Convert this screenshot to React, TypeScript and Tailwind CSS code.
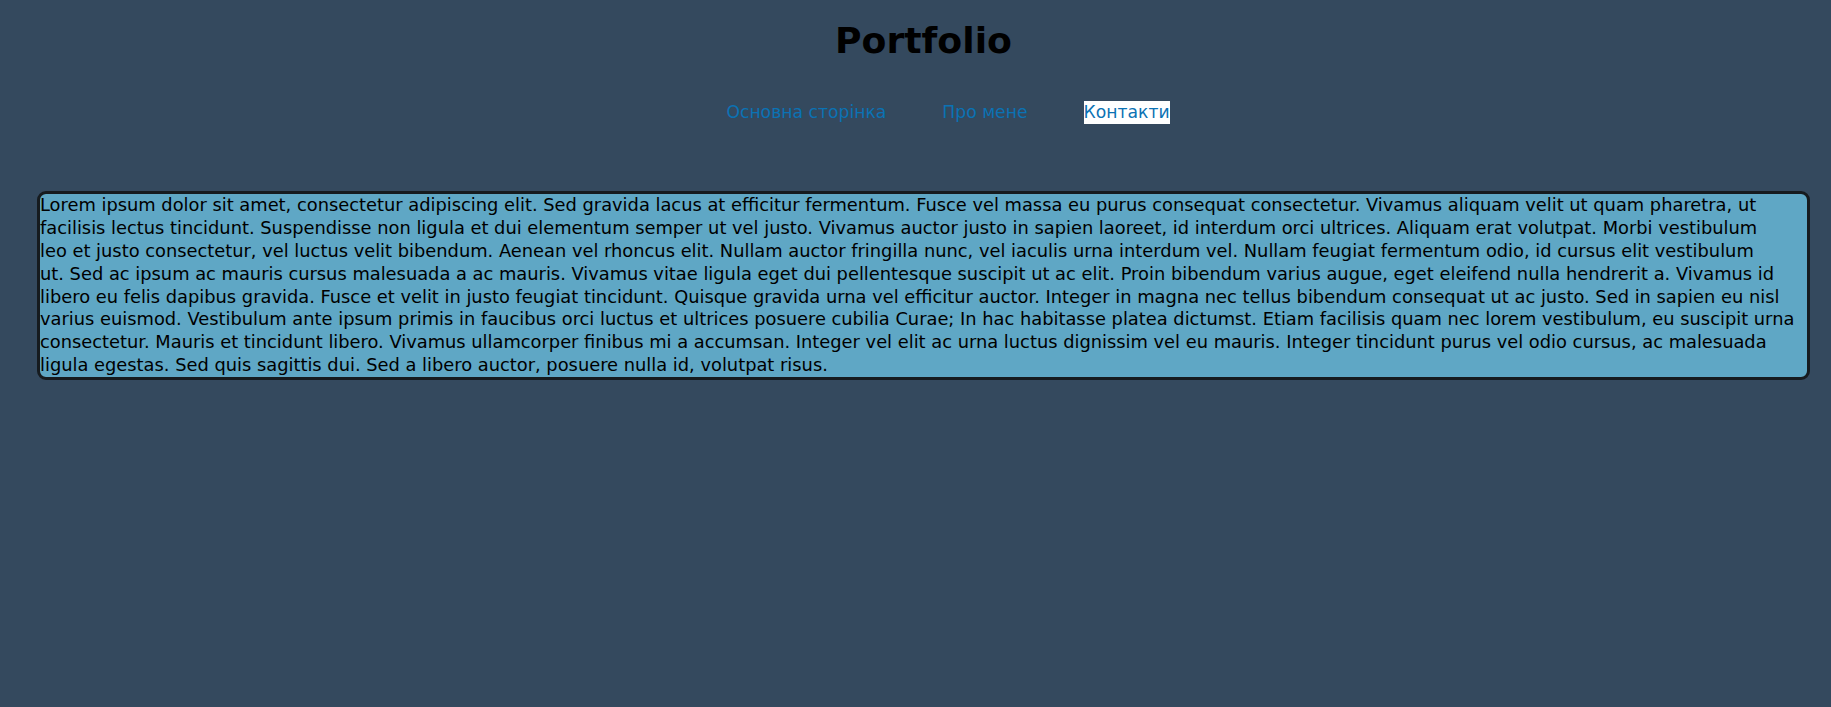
import React from "react";

const lines = [
  "Lorem ipsum dolor sit amet, consectetur adipiscing elit. Sed gravida lacus at efficitur fermentum. Fusce vel massa eu purus consequat consectetur. Vivamus aliquam velit ut quam pharetra, ut",
  "facilisis lectus tincidunt. Suspendisse non ligula et dui elementum semper ut vel justo. Vivamus auctor justo in sapien laoreet, id interdum orci ultrices. Aliquam erat volutpat. Morbi vestibulum",
  "leo et justo consectetur, vel luctus velit bibendum. Aenean vel rhoncus elit. Nullam auctor fringilla nunc, vel iaculis urna interdum vel. Nullam feugiat fermentum odio, id cursus elit vestibulum",
  "ut. Sed ac ipsum ac mauris cursus malesuada a ac mauris. Vivamus vitae ligula eget dui pellentesque suscipit ut ac elit. Proin bibendum varius augue, eget eleifend nulla hendrerit a. Vivamus id",
  "libero eu felis dapibus gravida. Fusce et velit in justo feugiat tincidunt. Quisque gravida urna vel efficitur auctor. Integer in magna nec tellus bibendum consequat ut ac justo. Sed in sapien eu nisl",
  "varius euismod. Vestibulum ante ipsum primis in faucibus orci luctus et ultrices posuere cubilia Curae; In hac habitasse platea dictumst. Etiam facilisis quam nec lorem vestibulum, eu suscipit urna",
  "consectetur. Mauris et tincidunt libero. Vivamus ullamcorper finibus mi a accumsan. Integer vel elit ac urna luctus dignissim vel eu mauris. Integer tincidunt purus vel odio cursus, ac malesuada",
  "ligula egestas. Sed quis sagittis dui. Sed a libero auctor, posuere nulla id, volutpat risus.",
];

export default function App() {
  return (
    <div className="min-h-screen w-full bg-[#34495e] font-['DejaVu_Sans',sans-serif] text-black">
      <header className="flex flex-col items-center pt-[20px]">
        <h1 className="pl-[16px] text-[36.2px] font-bold leading-[42px] text-black">Portfolio</h1>
        <nav className="mt-[39px] flex w-full justify-center pl-[65px]">
          <ul className="flex gap-[56px] text-[17.2px] leading-[23px]">
            <li>
              <a href="#" className="inline-block h-[23px] leading-[23px] text-[#0b72b4]">Основна сторінка</a>
            </li>
            <li>
              <a href="#" className="inline-block h-[23px] leading-[23px] text-[#0b72b4]">Про мене</a>
            </li>
            <li>
              <a href="#" className="inline-block h-[23px] bg-white leading-[23px] text-[#0b72b4]">Контакти</a>
            </li>
          </ul>
        </nav>
      </header>
      <main className="mt-[67px] pl-[37px]">
        <section className="w-[1773px] rounded-[9px] border-[3px] border-[#161b1f] bg-[#5fa7c5]">
          <p className="whitespace-nowrap text-[17.83px] leading-[22.875px] text-black">
            {lines.map((l, i) => (
              <React.Fragment key={i}>
                {l}
                {i < lines.length - 1 && <br />}
              </React.Fragment>
            ))}
          </p>
        </section>
      </main>
    </div>
  );
}
